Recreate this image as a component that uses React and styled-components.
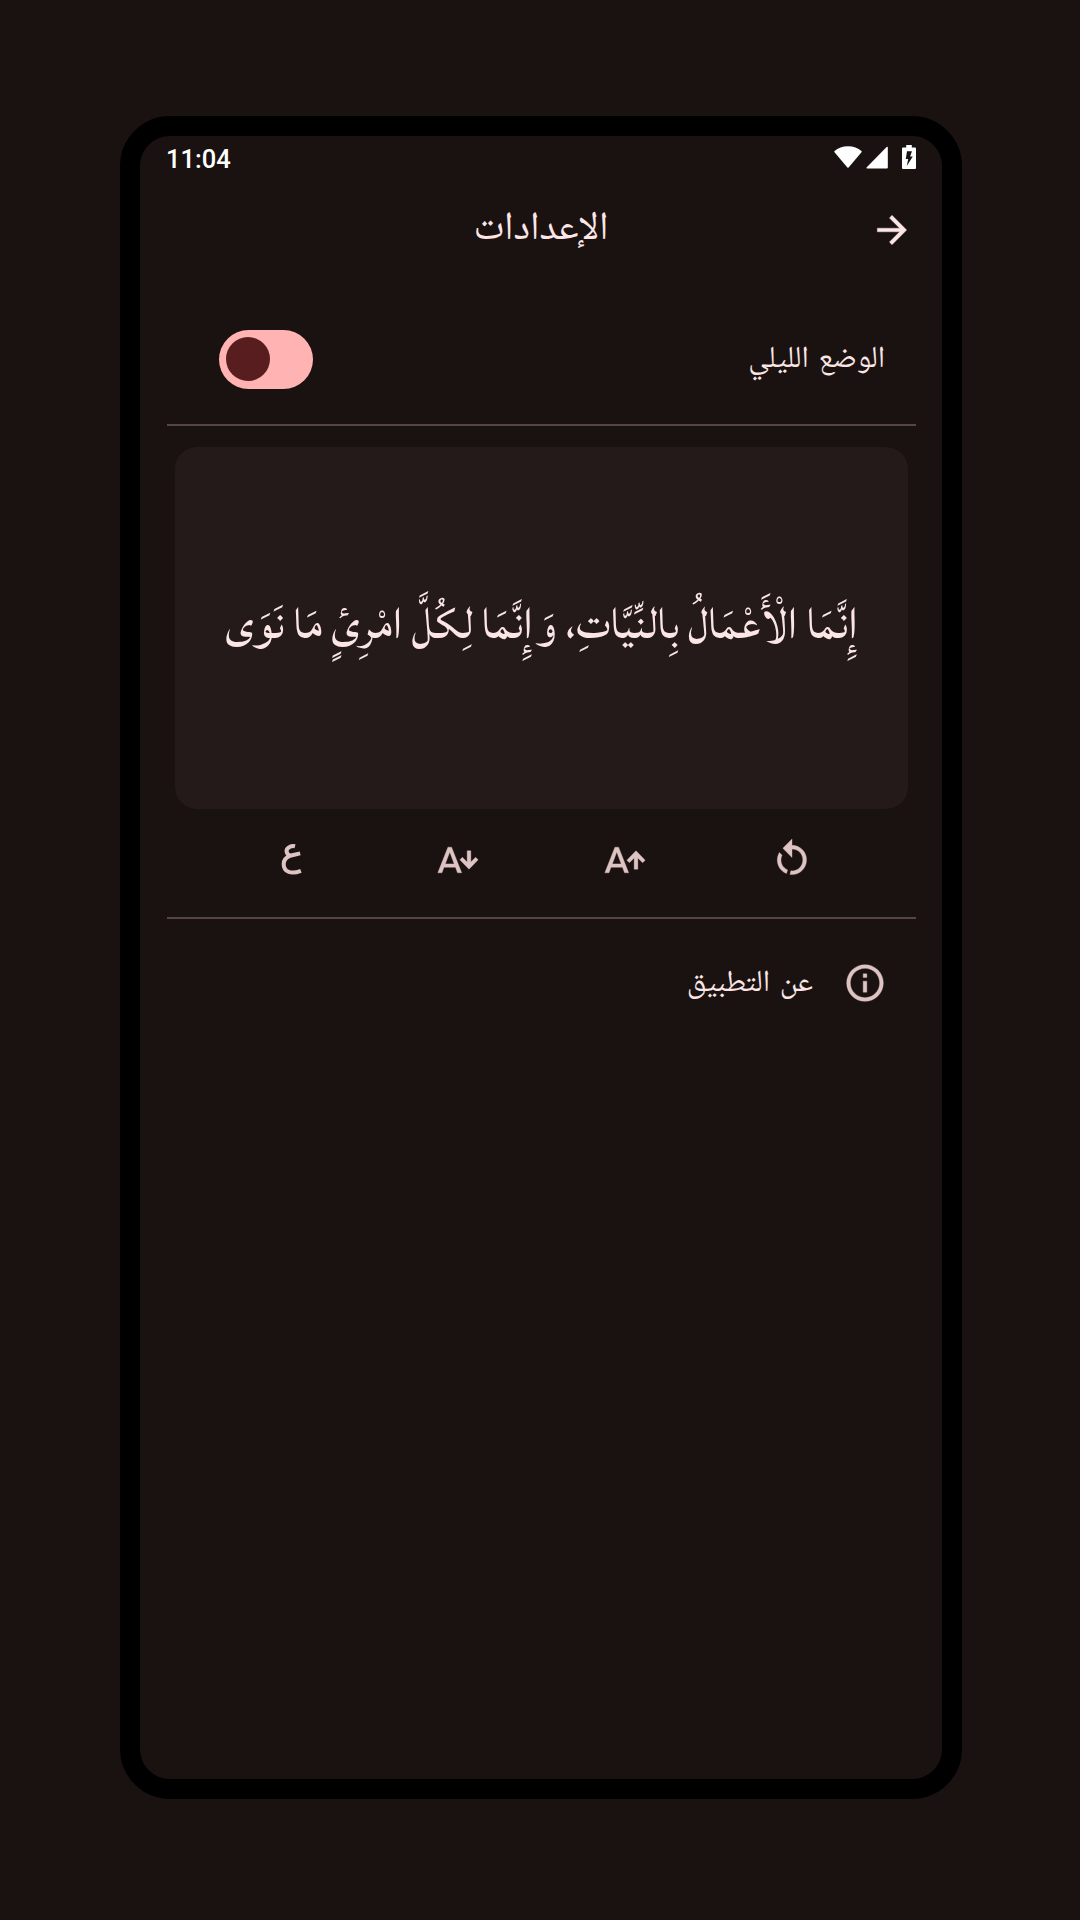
import React from 'react';
import styled, { createGlobalStyle } from 'styled-components';

const GlobalStyle = createGlobalStyle`
  * { box-sizing: border-box; }
  body { margin: 0; background: #1a1211; }
`;

const Page = styled.main`
  min-height: 1920px;
  padding: 116px 119px 121px 120px;
  display: flex;
  background: #1a1211;
`;

const Phone = styled.div`
  flex: 1;
  border: 20px solid #000;
  border-radius: 50px;
  background: #1a1211;
  color: #fbe6e5;
  font-family: 'Noto Naskh Arabic', 'Scheherazade New', 'DejaVu Sans', sans-serif;
  display: flex;
  flex-direction: column;
`;

const StatusBar = styled.header`
  height: 44px;
  padding: 0 26px;
  display: flex;
  align-items: center;
  justify-content: space-between;
  color: #fff;
`;

const Clock = styled.span`
  font: 500 25.5px/44px Roboto, sans-serif;
  padding-top: 2px;
`;

const StatusIcons = styled.div`
  display: flex;
  align-items: flex-end;
  height: 24px;
  margin-top: -2px;
  svg { display: block; fill: currentColor; }
`;

const Signal = styled.svg`
  margin: 0 14px 0 4px;
`;

const AppBar = styled.div`
  height: 102px;
  padding: 0 28px 2px;
  display: grid;
  grid-template-columns: 44px 1fr 44px;
  align-items: center;
`;

const Title = styled.h1`
  margin: 0;
  font-size: 39.8px;
  line-height: 60px;
  font-weight: 400;
  text-align: center;
`;

const Icon = styled.svg`
  display: block;
  width: 44px;
  height: 44px;
  fill: ${(p) => p.$color || '#dec3c3'};
  stroke: ${(p) => p.$color || '#dec3c3'};
  stroke-width: 0.2;
`;

const Label = styled.span`
  padding-top: 2px;
  font-size: 30.5px;
  line-height: 48px;
  word-spacing: 3px;
  white-space: nowrap;
`;

const SettingRow = styled.section`
  height: 142px;
  padding: 12px 57px 0 78.5px;
  display: flex;
  align-items: center;
  justify-content: space-between;
`;

const Switch = styled.button`
  width: 94px;
  height: 59px;
  padding: 0 7px;
  border: 0;
  border-radius: 30px;
  background: #ffb3b2;
  display: flex;
  align-items: center;
  justify-content: flex-end;
`;

const Thumb = styled.span`
  width: 44px;
  height: 44px;
  border-radius: 50%;
  background: #571d1f;
`;

const Divider = styled.hr`
  width: 749px;
  height: 2px;
  margin: 0 26px 0 0;
  border: 0;
  background: #564544;
`;

const Preview = styled.section`
  height: 362px;
  margin: 21px 34px 0 35px;
  padding-bottom: 7px;
  border-radius: 22px;
  background: #231a19;
  display: flex;
  align-items: center;
  justify-content: center;
`;

const Quote = styled.p`
  margin: 0;
  font-family: Lateef, 'Scheherazade New', 'Noto Naskh Arabic', 'DejaVu Sans', serif;
  font-size: 57.9px;
  line-height: 80px;
  white-space: nowrap;
`;

const Tools = styled.nav`
  height: 108px;
  padding: 0 67px 6px;
  display: grid;
  grid-template-columns: repeat(4, 167px);
  align-items: center;
  justify-items: center;
`;

const ToolButton = styled.button`
  padding: 0;
  border: 0;
  background: none;
`;

const AboutRow = styled.section`
  height: 127px;
  padding-right: 55px;
  display: flex;
  align-items: center;
  gap: 30px;
`;

const tools = [
  {
    name: 'restart',
    d: 'M12,4C14.1,4 16.1,4.8 17.6,6.3C20.7,9.4 20.7,14.5 17.6,17.6C15.8,19.5 13.3,20.2 10.9,19.9L11.4,17.9C13.1,18.1 14.9,17.5 16.2,16.2C18.5,13.9 18.5,10.1 16.2,7.7C15.1,6.6 13.5,6 12,6V10.6L7,5.6L12,0.6V4M6.3,17.6C3.7,15 3.3,11 5.1,7.9L6.6,9.4C5.5,11.6 5.9,14.4 7.8,16.2C8.3,16.7 8.9,17.1 9.6,17.4L9,19.4C8,19 7.1,18.4 6.3,17.6Z',
  },
  {
    name: 'increase',
    d: 'M5.12,14L7.5,7.67L9.87,14M6.5,5L1,19H3.25L4.37,16H10.62L11.75,19H14L8.5,5H6.5M18,7L13,12.07L14.41,13.5L17,10.9V17H19V10.9L21.59,13.5L23,12.07L18,7Z',
  },
  {
    name: 'decrease',
    d: 'M5.12,14L7.5,7.67L9.87,14M6.5,5L1,19H3.25L4.37,16H10.62L11.75,19H14L8.5,5H6.5M18,17L23,11.93L21.59,10.5L19,13.1V7H17V13.1L14.41,10.5L13,11.93L18,17Z',
  },
];

export default function App() {
  return (
    <Page>
      <GlobalStyle />
      <Phone>
        <StatusBar>
          <Clock>11:04</Clock>
          <StatusIcons>
            <svg width="28" height="24" viewBox="0 0 28 24">
              <path d="M0.3 6.3Q6 1.2 14 1.2T27.7 6.3V7L14.6 22.4Q14 23.1 13.4 22.4L0.3 7Z" />
            </svg>
            <Signal width="22" height="24" viewBox="0 0 22 24">
              <path d="M20.6 2Q21.8 1.2 21.8 2.6V22.5Q21.8 23.5 20.8 23.5H1.2Q-0.2 23.5 0.8 22.3Z" />
            </Signal>
            <svg width="14" height="24" viewBox="0 0 14 24">
              <path
                fillRule="evenodd"
                d="M4.2 0H9.8V2.4H13Q14 2.4 14 3.4V23Q14 24 13 24H1Q0 24 0 23V3.4Q0 2.4 1 2.4H4.2ZM5 6.3L3.8 14H6.2L4.8 21L10.8 11.5H8.1L10 6.3Z"
              />
            </svg>
          </StatusIcons>
        </StatusBar>
        <AppBar>
          <span />
          <Title dir="rtl">الإعدادات</Title>
          <Icon viewBox="0 0 24 24" $color="#fbe6e5">
            <path d="M12 4l-1.41 1.41L16.17 11H4v2h12.17l-5.58 5.59L12 20l8-8z" />
          </Icon>
        </AppBar>
        <div dir="rtl">
          <SettingRow>
            <Label>الوضع الليلي</Label>
            <Switch>
              <Thumb />
            </Switch>
          </SettingRow>
          <Divider />
          <Preview>
            <Quote>إِنَّمَا الْأَعْمَالُ بِالنِّيَّاتِ، وَإِنَّمَا لِكُلَّ امْرِئٍ مَا نَوَى</Quote>
          </Preview>
          <Tools>
            {tools.map((t) => (
              <ToolButton key={t.name}>
                <Icon viewBox="0 0 24 24">
                  <path d={t.d} />
                </Icon>
              </ToolButton>
            ))}
            <ToolButton>
              <Icon viewBox="0 0 24 24">
                <path
                  d="M14.2 4.5Q12.6 4.1 11 5T9.6 7.4T11.4 9.7L17 8.4M12 9.5Q8 11 8 14.2C8 18.8 12.2 19.9 17.4 17.9"
                  fill="none"
                  stroke="#dec3c3"
                  strokeWidth="2.2"
                />
              </Icon>
            </ToolButton>
          </Tools>
          <Divider />
          <AboutRow>
            <Icon viewBox="0 0 24 24">
              <path d="M11 7h2v2h-2zm0 4h2v6h-2zm1-9C6.48 2 2 6.48 2 12s4.48 10 10 10 10-4.48 10-10S17.52 2 12 2zm0 18c-4.41 0-8-3.59-8-8s3.59-8 8-8 8 3.59 8 8-3.59 8-8 8z" />
            </Icon>
            <Label>عن التطبيق</Label>
          </AboutRow>
        </div>
      </Phone>
    </Page>
  );
}
